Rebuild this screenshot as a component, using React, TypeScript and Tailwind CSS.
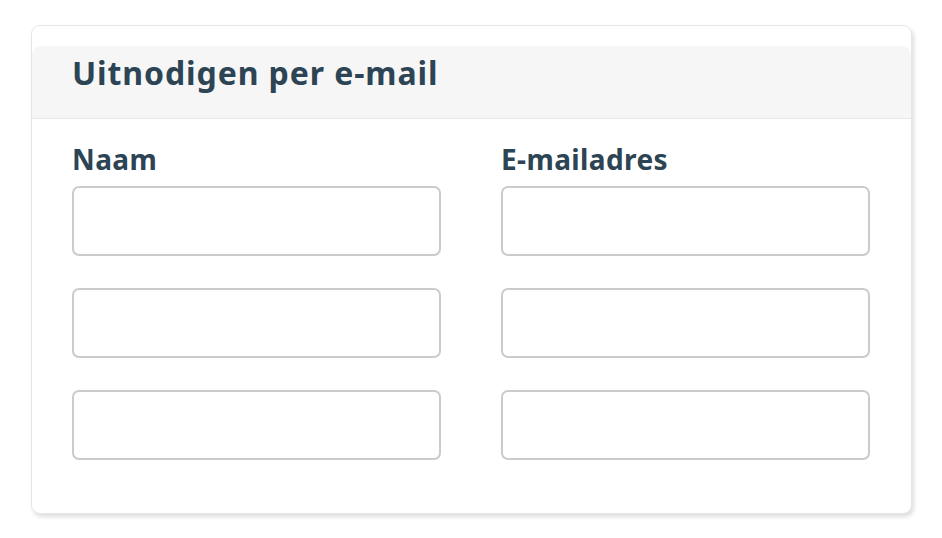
const rows = [0, 1, 2];

function Field() {
  return (
    <input
      type="text"
      className="block w-full h-[70px] rounded-[7px] border-2 border-[#cbcbcb] bg-white px-3 outline-none"
    />
  );
}

function Column({ label }: { label: string }) {
  return (
    <div className="flex flex-col">
      <label className="text-[28px] font-bold leading-[28px] tracking-[0.4px] text-[#2c4454] mb-[13px]">{label}</label>
      <div className="flex flex-col gap-[32px]">
        {rows.map((r) => (
          <Field key={r} />
        ))}
      </div>
    </div>
  );
}

export default function App() {
  return (
    <div className="min-h-screen bg-white pt-[25px] pl-[31px]" style={{ fontFamily: '"Noto Sans", sans-serif' }}>
      <div className="w-[881px] h-[489px] rounded-[9px] border border-[#e6e6e6] bg-white pt-[20px] shadow-[2px_3px_4px_rgba(0,0,0,0.13)]">
        {/* Header */}
        <div className="h-[73px] rounded-t-[9px] border-b border-[#e8e8e8] bg-[#f6f6f6] px-[40px] pt-[11px]">
          <h2 className="text-[32px] font-bold leading-[32px] text-[#2c4454] tracking-[0.9px]">Uitnodigen per e-mail</h2>
        </div>

        {/* Form */}
        <div className="grid grid-cols-2 gap-x-[60px] pl-[40px] pr-[41px] pt-[26px]">
          <Column label="Naam" />
          <Column label="E-mailadres" />
        </div>
      </div>
    </div>
  );
}
